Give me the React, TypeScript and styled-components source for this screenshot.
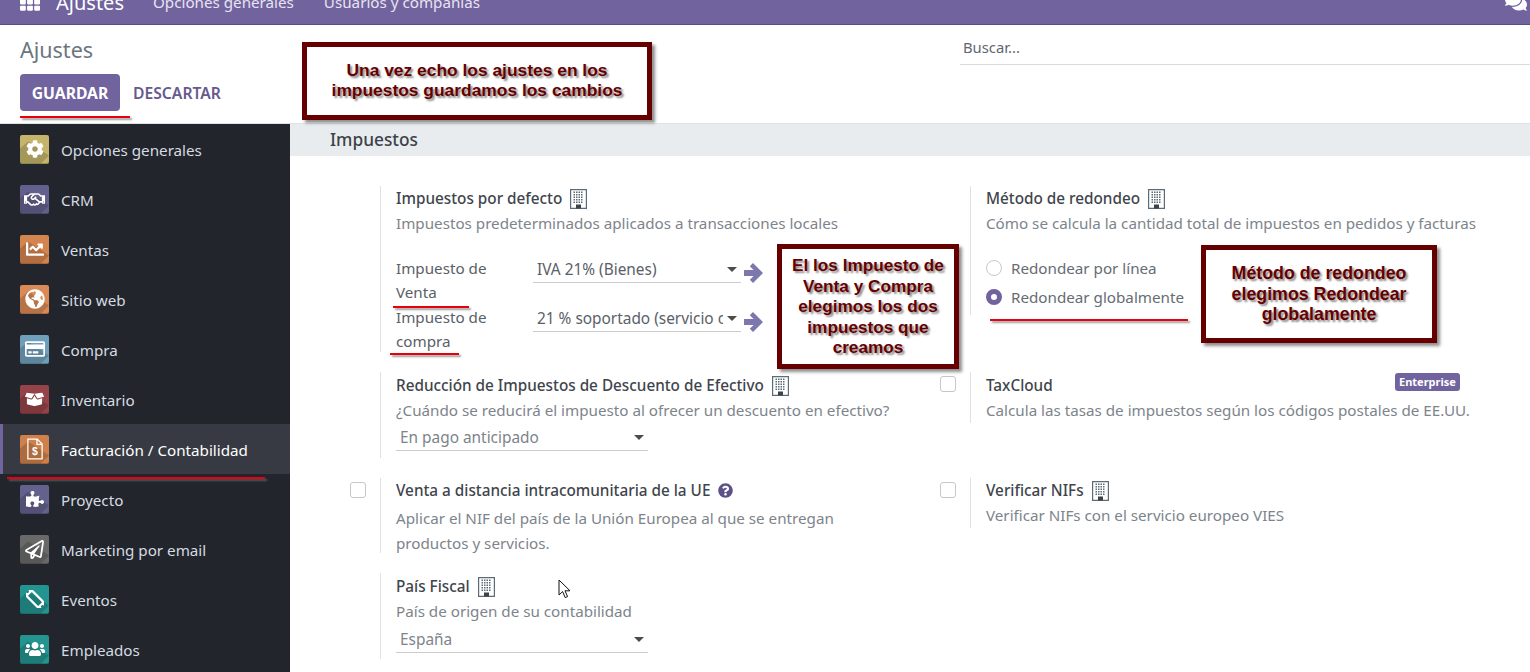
import { ReactNode } from "react";
import styled, { createGlobalStyle } from "styled-components";
import {
  FaCog,
  FaRegHandshake,
  FaChartLine,
  FaGlobeAmericas,
  FaRegCreditCard,
  FaBoxOpen,
  FaPuzzlePiece,
  FaRegPaperPlane,
  FaUsers,
  FaTh,
  FaComments,
  FaQuestionCircle,
} from "react-icons/fa";

const GlobalStyle = createGlobalStyle`
  html, body {
    margin: 0;
    padding: 0;
    width: 1530px;
    height: 672px;
    overflow: hidden;
    background: #fff;
    font-family: "Noto Sans", "Open Sans", sans-serif;
    font-size: 15.2px;
    color: #4c4c4c;
  }
  * { box-sizing: border-box; }
`;

const Page = styled.div`
  position: relative;
  width: 1530px;
  height: 672px;
  overflow: hidden;
  display: flex;
  flex-direction: column;
`;

const Navbar = styled.header`
  height: 25px;
  flex: none;
  background: #71639e;
  border-bottom: 1px solid #5b4f7f;
  overflow: hidden;
  color: #fff;
`;

const NavInner = styled.div`
  height: 46px;
  margin-top: -21px;
  display: flex;
  align-items: center;
  padding: 0 3px 0 20px;
`;

const AppsIcon = styled(FaTh)`
  width: 20px;
  height: 20px;
  margin-right: 16px;
`;

const Brand = styled.span`
  font-size: 20px;
  margin-right: 29px;
`;

const NavLink = styled.span`
  font-size: 15.2px;
  color: #e8e4f2;
  margin-right: 30px;
`;

const ChatIcon = styled(FaComments)`
  width: 22px;
  height: 22px;
  margin-left: auto;
`;

const ControlPanel = styled.div`
  height: 99px;
  flex: none;
  border-bottom: 1px solid #dee2e6;
  padding: 12px 0 0 20px;
  display: flex;
  justify-content: space-between;
`;

const PanelLeft = styled.div`
  display: flex;
  flex-direction: column;
`;

const PanelTitle = styled.div`
  font-size: 21.5px;
  line-height: 25px;
  color: #6b7580;
  margin-bottom: 12px;
`;

const PanelButtons = styled.div`
  display: flex;
  align-items: center;
  gap: 13px;
`;

const SaveButton = styled.button`
  width: 100px;
  height: 37px;
  border: 0;
  border-radius: 4px;
  background: #71639e;
  color: #fff;
  font: 700 15.7px "Noto Sans", sans-serif;
  padding: 0;
`;

const DiscardButton = styled.button`
  border: 0;
  background: none;
  color: #665a8c;
  font: 600 15.7px "Noto Sans", sans-serif;
  padding: 0;
`;

const SearchBox = styled.div`
  width: 570px;
  height: 28px;
  padding: 0 3px;
  border-bottom: 1px solid #d8dadd;
  font-size: 14.8px;
  line-height: 20px;
  color: #5f6770;
`;

const Body = styled.div`
  flex: 1;
  display: flex;
  min-height: 0;
`;

const Sidebar = styled.nav`
  width: 290px;
  flex: none;
  background: #22252b;
`;

const MenuItem = styled.div<{ $active?: boolean }>`
  height: 50px;
  display: flex;
  align-items: center;
  padding-left: ${(p) => (p.$active ? "17px" : "20px")};
  gap: 12px;
  font-size: 15.2px;
  color: ${(p) => (p.$active ? "#fff" : "#d5dbe1")};
  background: ${(p) => (p.$active ? "#373a42" : "transparent")};
  border-left: ${(p) => (p.$active ? "3px solid #71639e" : "0")};
`;

const MenuLabel = styled.span`
  padding-top: 2px;
`;

const Tile = styled.span<{ $color: string; $size: number }>`
  position: relative;
  width: 29px;
  height: 29px;
  flex: none;
  border-radius: 2px;
  overflow: hidden;
  background: ${(p) => p.$color};
  box-shadow: inset 0 -1px 0 rgba(0, 0, 0, 0.2);
  display: flex;
  align-items: center;
  justify-content: center;
  color: #fff;

  &::before {
    content: "";
    position: absolute;
    inset: 0;
    background: rgba(0, 0, 0, 0.16);
    clip-path: polygon(0 48%, 28% 24%, 100% 72%, 72% 100%, 0 100%);
  }

  svg {
    position: relative;
    width: ${(p) => p.$size}px;
    height: ${(p) => p.$size}px;
  }
`;

const Main = styled.main`
  flex: 1;
  min-width: 0;
`;

const SectionHead = styled.h2`
  margin: 0;
  height: 32px;
  background: #e9ecef;
  padding-left: 40px;
  font-size: 17.3px;
  font-weight: 500;
  line-height: 31px;
  color: #3c4249;
`;

const SettingsGrid = styled.div`
  display: grid;
  grid-template-columns: 590px 590px;
  grid-template-rows: 166px 86px 75px 86px;
  row-gap: 20px;
  padding: 30px 0 0 60px;
  align-items: start;
`;

const Setting = styled.section`
  display: flex;
  height: 100%;
`;

const CheckPane = styled.div`
  width: 30px;
  flex: none;
  padding: 4px 0 0 1px;
`;

const Check = styled.span`
  display: block;
  width: 16px;
  height: 16px;
  margin-left: -1px;
  border: 1px solid #c4c8cc;
  border-radius: 3px;
  background: #fff;
`;

const RightPane = styled.div<{ $fit?: boolean; $top?: number }>`
  position: relative;
  flex: 1;
  align-self: ${(p) => (p.$fit ? "flex-start" : "stretch")};
  border-left: 1px solid #dee2e6;
  padding: ${(p) => p.$top ?? 0}px 0 0 15px;
  line-height: 24.5px;
`;

const Title = styled.div`
  display: flex;
  align-items: center;
  gap: 8px;
  font-size: 15.3px;
  font-weight: 500;
  color: #3f454c;
  height: 25px;
`;

const Help = styled.div<{ $top?: number }>`
  margin-top: ${(p) => p.$top ?? 0}px;
  font-size: 15.2px;
  color: #7d848b;
`;

const TaxRow = styled.div`
  display: grid;
  grid-template-columns: 137px 208px;
  font-size: 15.2px;
  color: #5a6067;
`;

const TaxRows = styled.div`
  margin-top: 20px;
  display: flex;
  flex-direction: column;
`;

const SelectBox = styled.div<{ $width: number; $top: number; $muted?: boolean }>`
  position: relative;
  width: ${(p) => p.$width}px;
  height: 26px;
  margin-top: ${(p) => p.$top}px;
  border-bottom: 1px solid #ccc;
  padding: 0 18px 0 4px;
  font-size: 15.4px;
  line-height: 26px;
  color: ${(p) => (p.$muted ? "#7d848b" : "#5a6067")};

  &::after {
    content: "";
    position: absolute;
    right: 4px;
    top: 10px;
    border-left: 5px solid transparent;
    border-right: 5px solid transparent;
    border-top: 5px solid #4c4c4c;
  }
`;

const SelectText = styled.span`
  display: block;
  height: 25px;
  white-space: nowrap;
  overflow: hidden;
`;

const RadioList = styled.div`
  margin-top: 20px;
  display: flex;
  flex-direction: column;
`;

const RadioRow = styled.div`
  display: flex;
  align-items: center;
  gap: 9px;
  height: 24.5px;
  margin-bottom: 5px;
  font-size: 15.2px;
  color: #666c73;
`;

const Radio = styled.span<{ $on?: boolean }>`
  width: 16px;
  height: 16px;
  border-radius: 50%;
  background: #fff;
  border: ${(p) => (p.$on ? "5px solid #71639e" : "1px solid #c4c8cc")};
`;

const Badge = styled.span`
  position: absolute;
  top: 1px;
  left: 424px;
  height: 18px;
  padding: 0 4px;
  border-radius: 3px;
  background: #71639e;
  color: #fff;
  font-size: 11px;
  font-weight: 700;
  line-height: 18px;
`;

const HelpIcon = styled(FaQuestionCircle)`
  width: 15px;
  height: 15px;
  color: #5d5186;
`;

const Note = styled.div<{ $x: number; $y: number; $w: number; $h: number; $size: number; $lift?: number }>`
  position: absolute;
  left: ${(p) => p.$x}px;
  top: ${(p) => p.$y}px;
  width: ${(p) => p.$w}px;
  height: ${(p) => p.$h}px;
  border: 5px solid #660000;
  background: #fff;
  box-shadow: 3px 3px 3px #8f8f8f;
  padding-bottom: ${(p) => p.$lift ?? 0}px;
  display: flex;
  align-items: center;
  justify-content: center;
  text-align: center;
  font-family: "Liberation Sans", Arial, sans-serif;
  font-weight: 700;
  font-size: ${(p) => p.$size}px;
  line-height: 20.5px;
  color: #660000;
  text-shadow: 2px 2px 2px #8a8a8a;
`;

const RedLine = styled.div<{ $x: number; $y: number; $w: number }>`
  position: absolute;
  left: ${(p) => p.$x}px;
  top: ${(p) => p.$y}px;
  width: ${(p) => p.$w}px;
  height: 2px;
  background: #e8000c;
  box-shadow: 2px 2px 2px rgba(110, 110, 110, 0.7);
`;

const Arrow = styled.svg<{ $x: number; $y: number }>`
  position: absolute;
  left: ${(p) => p.$x}px;
  top: ${(p) => p.$y}px;
  width: 21px;
  height: 22px;
`;

const Cursor = styled.svg`
  position: absolute;
  left: 558px;
  top: 579px;
  width: 13px;
  height: 20px;
`;

// FA "building-o" style glyph, the package one has the wrong window grid
function BuildingIcon() {
  const dots: ReactNode[] = [];
  for (let row = 0; row < 5; row++) {
    for (let col = 0; col < 4; col++) {
      dots.push(<rect key={`${row}-${col}`} x={3.5 + col * 2.5} y={2.5 + row * 2.5} width="1.5" height="1.5" />);
    }
  }
  return (
    <svg width="17" height="20" viewBox="0 0 17 20" fill="#5b6b78">
      <path fillRule="evenodd" d="M0 0h17v20H0zM1.2 1.2v17.6h14.6V1.2z" />
      {dots}
      <rect x="6" y="15.5" width="5" height="4" fill="#3c4249" />
    </svg>
  );
}

function BillIcon() {
  return (
    <svg viewBox="0 0 17 17" fill="none" stroke="#fff" strokeWidth="1">
      <path d="M3 .8h7.2L14 4.6v11.6H3zM10 1v4h4" />
      <text x="8.5" y="13.2" textAnchor="middle" fill="#fff" stroke="none" fontSize="8" fontWeight="700" fontFamily="Liberation Sans">
        $
      </text>
    </svg>
  );
}

function TicketIcon() {
  return (
    <svg viewBox="0 0 20 20">
      <g transform="rotate(45 10 10)">
        <path
          fillRule="evenodd"
          fill="#fff"
          d="M-2 4.5h24v3.7a1.8 1.8 0 0 0 0 3.6v3.7H-2v-3.7a1.8 1.8 0 0 0 0-3.6zM2 7v6h16V7z"
        />
      </g>
    </svg>
  );
}

const menu: { label: string; color: string; icon: ReactNode; size: number; active?: boolean }[] = [
  { label: "Opciones generales", color: "#c4b46c", icon: <FaCog />, size: 18 },
  { label: "CRM", color: "#62608c", icon: <FaRegHandshake />, size: 21 },
  { label: "Ventas", color: "#d4844f", icon: <FaChartLine />, size: 18 },
  { label: "Sitio web", color: "#d98a56", icon: <FaGlobeAmericas />, size: 20 },
  { label: "Compra", color: "#6f9fba", icon: <FaRegCreditCard />, size: 20 },
  { label: "Inventario", color: "#954349", icon: <FaBoxOpen />, size: 19 },
  { label: "Facturación / Contabilidad", color: "#d0804a", icon: <BillIcon />, size: 22, active: true },
  { label: "Proyecto", color: "#64618c", icon: <FaPuzzlePiece />, size: 18 },
  { label: "Marketing por email", color: "#696969", icon: <FaRegPaperPlane />, size: 19 },
  { label: "Eventos", color: "#23948f", icon: <TicketIcon />, size: 18 },
  { label: "Empleados", color: "#23948f", icon: <FaUsers />, size: 20 },
];

function ArrowMark({ x, y }: { x: number; y: number }) {
  return (
    <Arrow $x={x} $y={y} viewBox="0 0 21 22">
      <path d="M10 1l10 10-10 10-3.2-3.2 3.8-3.8H1V8h9.6L6.8 4.2z" fill="#7c78ad" />
    </Arrow>
  );
}

export default function App() {
  return (
    <Page>
      <GlobalStyle />
      <Navbar>
        <NavInner>
          <AppsIcon />
          <Brand>Ajustes</Brand>
          <NavLink>Opciones generales</NavLink>
          <NavLink>Usuarios y compañías</NavLink>
          <ChatIcon />
        </NavInner>
      </Navbar>

      <ControlPanel>
        <PanelLeft>
          <PanelTitle>Ajustes</PanelTitle>
          <PanelButtons>
            <SaveButton>GUARDAR</SaveButton>
            <DiscardButton>DESCARTAR</DiscardButton>
          </PanelButtons>
        </PanelLeft>
        <SearchBox>Buscar...</SearchBox>
      </ControlPanel>

      <Body>
        <Sidebar>
          {menu.map((item) => (
            <MenuItem key={item.label} $active={item.active}>
              <Tile $color={item.color} $size={item.size}>
                {item.icon}
              </Tile>
              <MenuLabel>{item.label}</MenuLabel>
            </MenuItem>
          ))}
        </Sidebar>

        <Main>
          <SectionHead>Impuestos</SectionHead>
          <SettingsGrid>
            <Setting>
              <CheckPane />
              <RightPane>
                <Title>
                  Impuestos por defecto <BuildingIcon />
                </Title>
                <Help>Impuestos predeterminados aplicados a transacciones locales</Help>
                <TaxRows>
                  <TaxRow>
                    <div>
                      Impuesto de
                      <br />
                      Venta
                    </div>
                    <SelectBox $width={208} $top={1}>
                      <SelectText>IVA 21% (Bienes)</SelectText>
                    </SelectBox>
                  </TaxRow>
                  <TaxRow>
                    <div>
                      Impuesto de
                      <br />
                      compra
                    </div>
                    <SelectBox $width={208} $top={1}>
                      <SelectText>21 % soportado (servicio c</SelectText>
                    </SelectBox>
                  </TaxRow>
                </TaxRows>
              </RightPane>
            </Setting>

            <Setting>
              <CheckPane />
              <RightPane $fit>
                <Title>
                  Método de redondeo <BuildingIcon />
                </Title>
                <Help>Cómo se calcula la cantidad total de impuestos en pedidos y facturas</Help>
                <RadioList>
                  <RadioRow>
                    <Radio />
                    Redondear por línea
                  </RadioRow>
                  <RadioRow>
                    <Radio $on />
                    Redondear globalmente
                  </RadioRow>
                </RadioList>
              </RightPane>
            </Setting>

            <Setting>
              <CheckPane />
              <RightPane $top={1}>
                <Title>
                  Reducción de Impuestos de Descuento de Efectivo <BuildingIcon />
                </Title>
                <Help>¿Cuándo se reducirá el impuesto al ofrecer un descuento en efectivo?</Help>
                <SelectBox $width={252} $top={2} $muted>
                  <SelectText>En pago anticipado</SelectText>
                </SelectBox>
              </RightPane>
            </Setting>

            <Setting>
              <CheckPane>
                <Check />
              </CheckPane>
              <RightPane $fit $top={1}>
                <Title>TaxCloud</Title>
                <Badge>Enterprise</Badge>
                <Help>Calcula las tasas de impuestos según los códigos postales de EE.UU.</Help>
              </RightPane>
            </Setting>

            <Setting>
              <CheckPane>
                <Check />
              </CheckPane>
              <RightPane>
                <Title>
                  Venta a distancia intracomunitaria de la UE <HelpIcon />
                </Title>
                <Help $top={3}>
                  Aplicar el NIF del país de la Unión Europea al que se entregan
                  <br />
                  productos y servicios.
                </Help>
              </RightPane>
            </Setting>

            <Setting>
              <CheckPane>
                <Check />
              </CheckPane>
              <RightPane $fit>
                <Title>
                  Verificar NIFs <BuildingIcon />
                </Title>
                <Help>Verificar NIFs con el servicio europeo VIES</Help>
              </RightPane>
            </Setting>

            <Setting>
              <CheckPane />
              <RightPane $top={1}>
                <Title>
                  País Fiscal <BuildingIcon />
                </Title>
                <Help>País de origen de su contabilidad</Help>
                <SelectBox $width={252} $top={3} $muted>
                  <SelectText>España</SelectText>
                </SelectBox>
              </RightPane>
            </Setting>
          </SettingsGrid>
        </Main>
      </Body>

      <Note $x={302} $y={42} $w={350} $h={78} $size={17.4} $lift={2}>
        Una vez echo los ajustes en los
        <br />
        impuestos guardamos los cambios
      </Note>
      <Note $x={777} $y={244} $w={182} $h={125} $size={17.2}>
        El los Impuesto de
        <br />
        Venta y Compra
        <br />
        elegimos los dos
        <br />
        impuestos que
        <br />
        creamos
      </Note>
      <Note $x={1201} $y={245} $w={236} $h={98} $size={17.8}>
        Método de redondeo
        <br />
        elegimos Redondear
        <br />
        globalamente
      </Note>

      <ArrowMark x={743} y={262} />
      <ArrowMark x={743} y={311} />

      <RedLine $x={20} $y={116} $w={110} />
      <RedLine $x={7} $y={477} $w={258} />
      <RedLine $x={393} $y={306} $w={76} />
      <RedLine $x={390} $y={353} $w={69} />
      <RedLine $x={990} $y={319} $w={198} />

      <Cursor viewBox="0 0 13 20">
        <path d="M1 1v15l3.6-3.4 2.6 6 2.4-1-2.6-5.8H12z" fill="#fff" stroke="#111" strokeWidth="1" />
      </Cursor>
    </Page>
  );
}
